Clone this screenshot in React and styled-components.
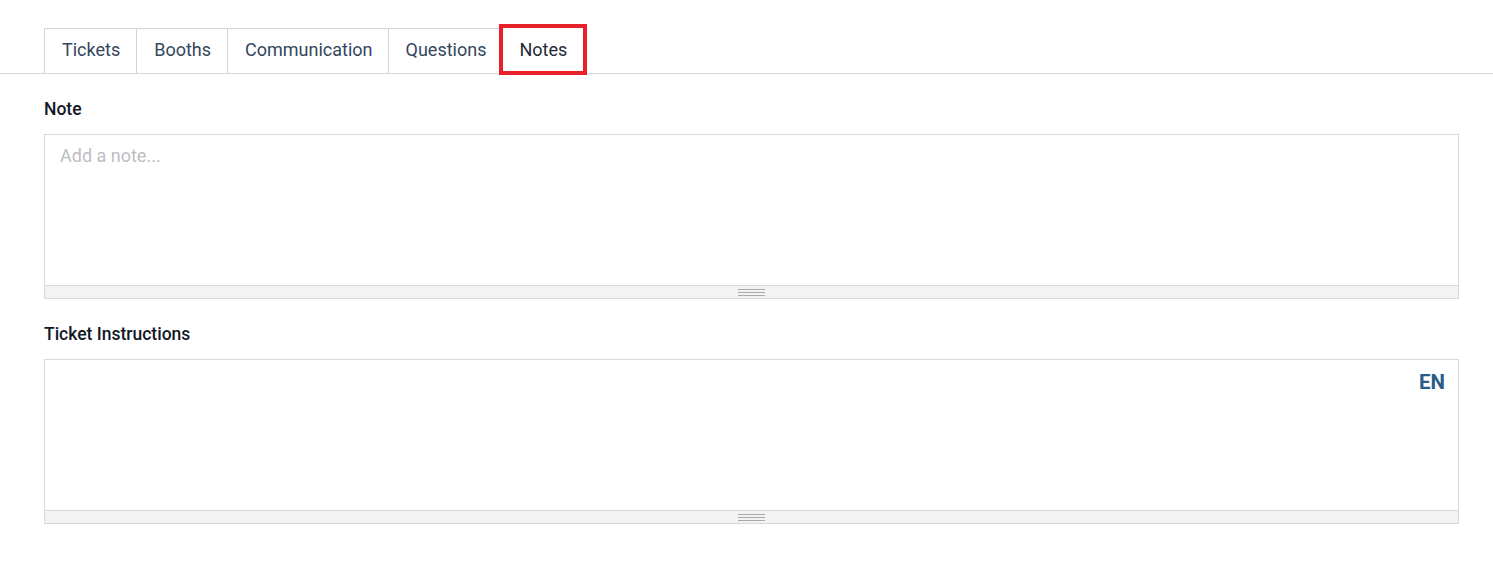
import React, { useState } from 'react'
import styled, { createGlobalStyle } from 'styled-components'

const GlobalStyle = createGlobalStyle`
  body {
    margin: 0;
    background: #fff;
    font-family: Roboto, "Liberation Sans", sans-serif;
  }
`

const tabs = ['Tickets', 'Booths', 'Communication', 'Questions', 'Notes']

const App = () => {
  const [active, setActive] = useState('Notes')
  return (
    <Wrapper>
      <GlobalStyle />
      <TabBar>
        {tabs.map(tab => (
          <Tab key={tab} active={tab === active} onClick={() => setActive(tab)}>
            {tab}
          </Tab>
        ))}
      </TabBar>
      <Content>
        <Field>
          <Label>Note</Label>
          <Box>
            <Editor placeholder="Add a note..." />
            <Grip>
              <GripLines />
            </Grip>
          </Box>
        </Field>
        <Field>
          <Label>Ticket Instructions</Label>
          <Box>
            <Editor />
            <Lang>EN</Lang>
            <Grip>
              <GripLines />
            </Grip>
          </Box>
        </Field>
      </Content>
    </Wrapper>
  )
}

export default App

const Wrapper = styled.div`
  padding-top: 28px;
`

const TabBar = styled.div`
  display: flex;
  padding-left: 44px;
  border-bottom: 1px solid #d6d6dc;
`

const Tab = styled.div`
  position: relative;
  height: 45px;
  box-sizing: border-box;
  display: flex;
  align-items: center;
  padding: 0 16px 3px 17px;
  font-size: 18px;
  color: ${p => (p.active ? '#1f2937' : '#34465c')};
  border: 1px solid ${p => (p.active ? 'transparent' : '#d2d2da')};
  border-bottom: none;
  margin-left: -1px;
  cursor: pointer;
  &:first-child {
    margin-left: 0;
  }
  &:nth-child(3) {
    padding-right: 15px;
  }
  &:nth-child(4) {
    padding-right: 15px;
  }
  ${p =>
    p.active &&
    `
    &::after {
      content: '';
      position: absolute;
      left: -3px;
      right: -4px;
      top: -5px;
      bottom: -2px;
      border: 4px solid #e8202a;
    }
  `}
`

const Content = styled.div`
  padding: 23px 34px 0 44px;
`

const Field = styled.div`
  margin-bottom: 23px;
`

const Label = styled.div`
  font-size: 17.5px;
  font-weight: 500;
  line-height: 24px;
  color: #111827;
  margin-bottom: 13px;
`

const Box = styled.div`
  position: relative;
  border: 1px solid #d9d9d9;
  display: flex;
  flex-direction: column;
`

const Editor = styled.textarea`
  height: 150px;
  box-sizing: border-box;
  border: none;
  outline: none;
  resize: none;
  padding: 9px 15px;
  font-family: Roboto, "Liberation Sans", sans-serif;
  font-size: 18px;
  line-height: 24px;
  color: #222;
  &::placeholder {
    color: #bdbdc2;
  }
`

const Lang = styled.div`
  position: absolute;
  top: 10px;
  right: 13px;
  font-size: 20.5px;
  font-weight: 700;
  color: #2b5b88;
`

const Grip = styled.div`
  height: 12px;
  background: #f3f3f3;
  border-top: 1px solid #d9d9d9;
  display: flex;
  align-items: center;
  justify-content: center;
`

const GripLines = styled.div`
  width: 27px;
  height: 5px;
  border-top: 1px solid #a9a9a9;
  border-bottom: 1px solid #a9a9a9;
  background: linear-gradient(#a9a9a9, #a9a9a9) center / 100% 1px no-repeat;
`
